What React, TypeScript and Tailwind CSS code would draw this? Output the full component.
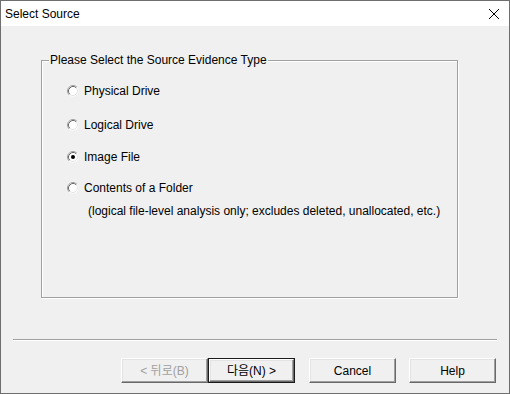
import React, { useState } from 'react'

const options = [
    { id: 'physical', label: 'Physical Drive', gap: 'mt-[23px]' },
    { id: 'logical', label: 'Logical Drive', gap: 'mt-[20px]' },
    { id: 'image', label: 'Image File', gap: 'mt-[18px]' },
    { id: 'folder', label: 'Contents of a Folder', gap: 'mt-[17px]' },
]

export default function App() {
    const [selected, setSelected] = useState('image')

    return (
        <div className="w-[510px] h-[394px] flex flex-col border border-[#6e6e6e] bg-[#f0f0f0] text-black text-[12px] leading-[14px] font-['Liberation_Sans','Noto_Sans_CJK_KR',sans-serif] select-none">
            {/* title bar */}
            <div className="h-[25px] flex items-center justify-between bg-white pl-[4px] pr-[9px]">
                <span className="text-[12px]">Select Source</span>
                <svg width="12" height="12" viewBox="0 0 12 12">
                    <path d="M1 1 L11 11 M11 1 L1 11" stroke="#000" strokeWidth="1" />
                </svg>
            </div>

            <div className="flex-1 flex flex-col">
                {/* group box */}
                <div className="relative mt-[34px] ml-[40px] w-[417px] h-[238px] border border-[#a0a0a0] shadow-[inset_1px_1px_0_#fff,1px_1px_0_#fff]">
                    <span className="absolute -top-[8px] left-[7px] px-[1px] bg-[#f0f0f0]">
                        Please Select the Source Evidence Type
                    </span>
                    <div className="flex flex-col pl-[25px]">
                        {options.map((opt) => (
                            <div key={opt.id} className={opt.gap}>
                                <label className="flex items-center h-[14px] gap-[5px]" onClick={() => setSelected(opt.id)}>
                                    <Radio checked={selected === opt.id} />
                                    <span>{opt.label}</span>
                                </label>
                            </div>
                        ))}
                        <p className="mt-[9px] pl-[21px]">
                            (logical file-level analysis only; excludes deleted, unallocated, etc.)
                        </p>
                    </div>
                </div>

                {/* separator */}
                <div className="mt-[41px] mx-[12px] h-[2px] border-t border-[#a0a0a0] border-b border-b-white" />

                {/* buttons */}
                <div className="mt-[17px] flex pl-[120px]">
                    <DialogButton label="< 뒤로(B)" disabled />
                    <DialogButton label="다음(N) >" isDefault />
                    <div className="w-[14px]" />
                    <DialogButton label="Cancel" />
                    <div className="w-[13px]" />
                    <DialogButton label="Help" />
                </div>
            </div>
        </div>
    )
}

const Radio = ({ checked }: { checked: boolean }) => {
    return (
        <svg width="12" height="12" viewBox="0 0 12 12" className="shrink-0">
            <circle cx="6" cy="6" r="5.5" fill="#fff" />
            <path d="M2.11 9.89 A5.5 5.5 0 0 1 9.89 2.11" fill="none" stroke="#a0a0a0" strokeWidth="1" />
            <path d="M2.82 9.18 A4.5 4.5 0 0 1 9.18 2.82" fill="none" stroke="#696969" strokeWidth="1" />
            <path d="M9.18 2.82 A4.5 4.5 0 0 1 2.82 9.18" fill="none" stroke="#e3e3e3" strokeWidth="1" />
            {checked && <circle cx="6" cy="6" r="2" fill="#000" />}
        </svg>
    )
}

const DialogButton = ({ label, disabled, isDefault }: { label: string, disabled?: boolean, isDefault?: boolean }) => {
    const face = (
        <div className={`flex-1 flex items-center justify-center bg-[#f0f0f0] border-t border-l border-t-white border-l-white border-b border-r border-b-[#696969] border-r-[#696969] shadow-[inset_-1px_-1px_0_#a0a0a0,inset_1px_1px_0_#e3e3e3] ${disabled ? 'text-[#a0a0a0]' : 'text-black'}`}>
            {label}
        </div>
    )
    return (
        <div className={`w-[87px] h-[25px] flex ${isDefault ? 'border border-[#1a1a1a]' : ''}`}>
            {face}
        </div>
    )
}
